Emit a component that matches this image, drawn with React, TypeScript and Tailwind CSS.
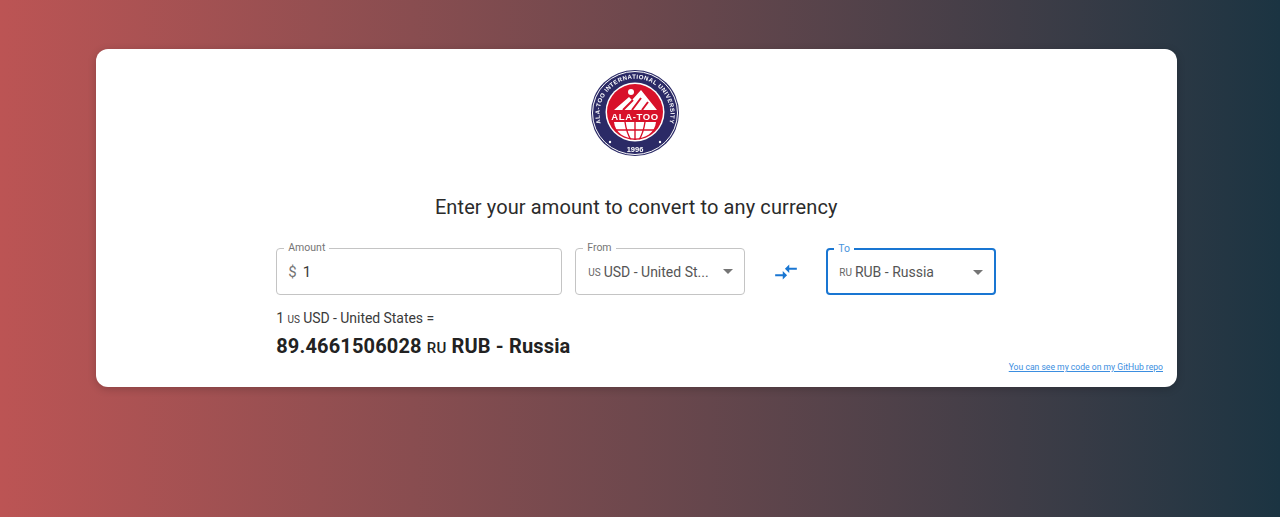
const roboto = "font-['Roboto',sans-serif]";

function Logo() {
  return (
    <svg width="90" height="88" viewBox="0 0 90 88" className="block blur-[0.4px]">
      <defs>
        <path id="ringTop" d="M 16 66 A 35.5 35.5 0 1 1 72 66" />
        <clipPath id="innerClip">
          <circle cx="44" cy="42" r="28" />
        </clipPath>
      </defs>
      <ellipse cx="44" cy="43" rx="44" ry="43" fill="#2b2a66" />
      <ellipse cx="44" cy="43" rx="42.5" ry="41.5" fill="none" stroke="#fff" strokeWidth="1" />
      <text fontSize="6" fontWeight="700" fill="#fff" fontFamily="Liberation Sans, sans-serif" letterSpacing="0.45">
        <textPath href="#ringTop" startOffset="50%" textAnchor="middle">
          ALA-TOO INTERNATIONAL UNIVERSITY
        </textPath>
      </text>
      <text x="44" y="82" fontSize="7.5" fontWeight="700" fill="#fff" textAnchor="middle" fontFamily="Liberation Sans, sans-serif">
        1996
      </text>
      <circle cx="19" cy="72" r="1.2" fill="#fff" />
      <circle cx="69" cy="72" r="1.2" fill="#fff" />
      <circle cx="44" cy="42" r="29.5" fill="#fff" />
      <circle cx="44" cy="42" r="28" fill="#d8112a" />
      <g clipPath="url(#innerClip)">
        <circle cx="40" cy="22" r="3" fill="#fff" />
        <path d="M23 40 L38 27 L41 30 L50 20 L66 40 Z" fill="#fff" />
        <path d="M32 40 L42 30 M41 40 L50 28 M51 40 L57 32" stroke="#d8112a" strokeWidth="2" fill="none" />
        <path d="M23 52 C 25 74 63 74 65 52 Z" fill="#fff" />
        <path d="M44 52 V70 M34 52 C 35 59 37 65 40 70 M54 52 C 53 59 51 65 48 70 M24 60 H64" stroke="#d8112a" strokeWidth="1.4" fill="none" />
      </g>
      <text x="44" y="49.5" fontSize="9.5" fontWeight="700" fill="#fff" textAnchor="middle" letterSpacing="0.6" fontFamily="Liberation Sans, sans-serif">
        ALA-TOO
      </text>
    </svg>
  );
}

function Caret() {
  return (
    <svg width="24" height="24" viewBox="0 0 24 24" className="absolute right-[4px] top-[10px]" fill="#757575">
      <path d="M7 10l5 5 5-5z" />
    </svg>
  );
}

function Field({
  label,
  focused,
  className,
  children,
}: {
  label: string;
  focused?: boolean;
  className: string;
  children: React.ReactNode;
}) {
  return (
    <div
      className={`relative h-[47px] rounded-[4px] bg-white flex items-center pt-[1px] ${
        focused ? 'border-2 border-[#1976d2]' : 'border border-[#c4c4c4]'
      } ${className}`}
    >
      <span
        className={`absolute top-[-8px] bg-white px-[4px] text-[10.5px] leading-[14px] ${
          focused ? 'left-[6px] text-[#4a94dd]' : 'left-[7px] text-[#757575]'
        }`}
      >
        {label}
      </span>
      {children}
    </div>
  );
}

export default function App() {
  return (
    <div className={`${roboto} h-[517px] overflow-hidden pt-[49px] pl-[95.5px] bg-gradient-to-r from-[#bc5454] to-[#1b3442]`}>
      <div className="w-[1081.5px] h-[338px] rounded-[12px] bg-white shadow-[0_2px_8px_rgba(0,0,0,0.2)] flex flex-col items-center relative">
        <div className="mt-[21px]">
          <Logo />
        </div>
        <h1 className="mt-[35px] text-[20px] leading-[28px] tracking-[0.1px] text-[#2b2b2b] font-normal">
          Enter your amount to convert to any currency
        </h1>
        <div className="mt-[27px] w-[720px]">
          <div className="flex items-center">
            <Field label="Amount" className="w-[286px] pl-[11px]">
              <span className="text-[15px] text-[#757575]">$</span>
              <span className="ml-[6px] text-[15px] text-[#3a3a3a]">1</span>
            </Field>
            <Field label="From" className="w-[170px] ml-[13px] pl-[12px]">
              <span className="text-[10px] text-[#666]">US</span>
              <span className="ml-[3px] text-[14px] text-[#555] whitespace-nowrap">USD - United St...</span>
              <Caret />
            </Field>
            <div className="w-[81px] flex justify-center">
              <svg width="26" height="26" viewBox="0 0 24 24" fill="#1976d2">
                <path d="M9.01 14H2v2h7.01v3L13 15l-3.99-4v3zm5.98-1v-3H22V8h-7.01V5L11 9l3.99 4z" />
              </svg>
            </div>
            <Field label="To" focused className="w-[170px] pl-[11px]">
              <span className="text-[10px] text-[#666]">RU</span>
              <span className="ml-[3px] text-[14px] text-[#555] whitespace-nowrap">RUB - Russia</span>
              <Caret />
            </Field>
          </div>
          <p className="mt-[14px] text-[14px] leading-[18px] tracking-[-0.05px] text-[#3a3a3a]">
            1 <span className="text-[10px]">US</span> USD - United States =
          </p>
          <p className="mt-[3px] text-[20px] leading-[28px] tracking-[0.15px] font-bold text-[#222]">
            89.4661506028 <span className="text-[15px] font-medium">RU</span> RUB - Russia
          </p>
        </div>
        <a href="#" className="absolute right-[14px] bottom-[14px] text-[8.6px] leading-[12px] underline text-[#3b8ee0]">
          You can see my code on my GitHub repo
        </a>
      </div>
    </div>
  );
}
